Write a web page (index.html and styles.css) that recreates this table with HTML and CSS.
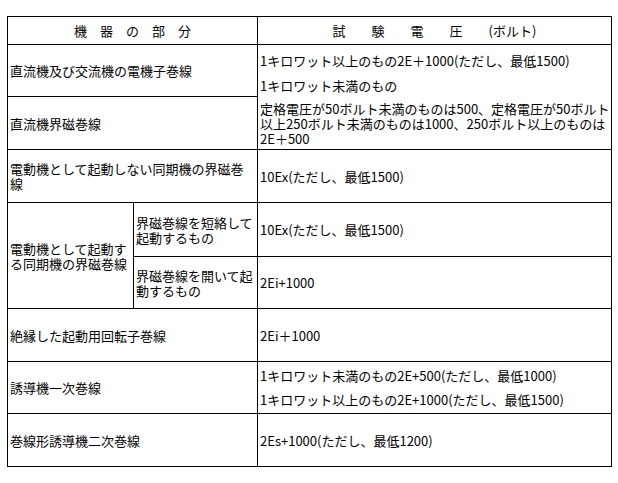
FILE: index.html
```html
<!DOCTYPE html>
<html lang="ja">
<head>
<meta charset="utf-8">
<link rel="stylesheet" href="styles.css">
</head>
<body>
<table class="spec">
  <colgroup>
    <col class="c1">
    <col class="c2">
    <col class="c3">
  </colgroup>
  <tr class="r-head">
    <th colspan="2">機　器　の　部　分</th>
    <th>試　　験　　電　　圧　　(ボルト)</th>
  </tr>
  <tr class="r52">
    <td colspan="2">直流機及び交流機の電機子巻線</td>
    <td rowspan="2" class="top">
      <p class="p1">1キロワット以上のもの2E＋1000(ただし、最低1500)</p>
      <p class="p2">1キロワット未満のもの</p>
      <p class="p3">定格電圧が50ボルト未満のものは500、定格電圧が50ボルト<br>以上250ボルト未満のものは1000、250ボルト以上のものは<br>2E＋500</p>
    </td>
  </tr>
  <tr class="r53">
    <td colspan="2">直流機界磁巻線</td>
  </tr>
  <tr class="r53">
    <td colspan="2">電動機として起動しない同期機の界磁巻線</td>
    <td>10Ex(ただし、最低1500)</td>
  </tr>
  <tr class="r54">
    <td rowspan="2">電動機として起動する同期機の界磁巻線</td>
    <td>界磁巻線を短絡して起動するもの</td>
    <td>10Ex(ただし、最低1500)</td>
  </tr>
  <tr class="r52">
    <td>界磁巻線を開いて起動するもの</td>
    <td>2Ei+1000</td>
  </tr>
  <tr class="r53">
    <td colspan="2">絶縁した起動用回転子巻線</td>
    <td>2Ei＋1000</td>
  </tr>
  <tr class="r52">
    <td colspan="2">誘導機一次巻線</td>
    <td>
      <p class="q1">1キロワット未満のもの2E+500(ただし、最低1000)</p>
      <p class="q2">1キロワット以上のもの2E+1000(ただし、最低1500)</p>
    </td>
  </tr>
  <tr class="r53">
    <td colspan="2">巻線形誘導機二次巻線</td>
    <td>2Es+1000(ただし、最低1200)</td>
  </tr>
</table>
</body>
</html>
```

FILE: styles.css
```css
html, body {
  margin: 0;
  padding: 0;
  background: #ffffff;
}
body {
  padding: 16px 0 0 7px;
  font-family: "Noto Sans CJK JP", "Noto Sans", sans-serif;
  font-size: 13px;
  color: #000000;
}
.spec {
  border-collapse: collapse;
  table-layout: fixed;
  width: 604px;
}
.c1 { width: 126px; }
.c2 { width: 124px; }
.c3 { width: 354px; }
.spec th, .spec td {
  border: 1px solid #000000;
  padding: 0 1px 0 2px;
  line-height: 15px;
  vertical-align: middle;
  text-align: left;
  font-weight: normal;
  overflow: hidden;
}
.spec th {
  text-align: center;
  padding: 0;
}
.spec td.top {
  vertical-align: top;
  padding-top: 8px;
}
.spec p { margin: 0; white-space: nowrap; }
.p2 { margin-top: 10px !important; }
.p3 { margin-top: 8px !important; }
.q2 { margin-top: 9px !important; }
.r-head { height: 28px; }
.r52 { height: 52px; }
.r53 { height: 53px; }
.r54 { height: 54px; }
```
